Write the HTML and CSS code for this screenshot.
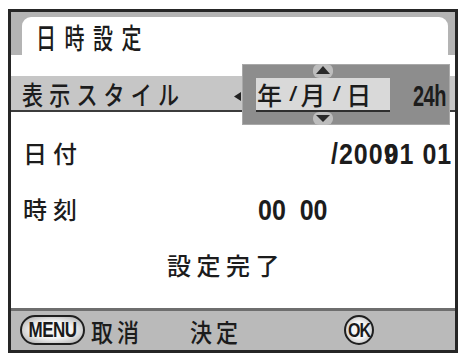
FILE: index.html
```html
<!DOCTYPE html>
<html lang="ja">
<head>
<meta charset="utf-8">
<title>日時設定</title>
<link rel="stylesheet" href="styles.css">
</head>
<body>
<div class="screen">
  <div class="tab"><div class="tab-inner"><span class="title">日時設定</span></div></div>
  <div class="gap"></div>
  <div class="style-row"><span class="style-label">表示スタイル</span></div>
  <div class="row"><span class="label">日付</span><span class="num date-val">/200<span class="ov">9</span>01 01</span></div>
  <div class="row"><span class="label">時刻</span><span class="num time-val">00&nbsp;&nbsp;00</span></div>
  <div class="row done-row"><span class="label">設定完了</span></div>
  <div class="spacer"></div>
  <div class="bar">
    <span class="pill menu"><span class="pill-text">MENU</span></span>
    <span class="bar-label cancel">取消</span>
    <span class="bar-label decide">決定</span>
    <span class="pill ok"><span class="pill-text">OK</span></span>
  </div>
  <div class="popup">
    <svg class="arrow-left" width="8" height="9" viewBox="0 0 8 9"><polygon points="7,0 7,9 0,4.5" fill="#222"/></svg>
    <svg class="arrow-up" width="22" height="14" viewBox="0 0 22 14"><rect x="1" y="0" width="20" height="14" rx="6" fill="#bdbdbd"/><polygon points="11,2 18,10 4,10" fill="#2a2a2a"/></svg>
    <div class="sel"><span class="cj y">年</span><span class="sl">/</span><span class="cj m">月</span><span class="sl">/</span><span class="cj d">日</span></div>
    <span class="h24">24h</span>
    <svg class="arrow-down" width="22" height="13" viewBox="0 0 22 13"><rect x="1" y="0" width="20" height="13" rx="6" fill="#bdbdbd"/><polygon points="4,3 18,3 11,10" fill="#2a2a2a"/></svg>
  </div>
</div>
</body>
</html>
```

FILE: styles.css
```css
* { box-sizing: border-box; }
html, body { margin: 0; padding: 0; background: #fff; }
body {
  font-family: "Noto Sans CJK JP", "Noto Sans", sans-serif;
  font-weight: 500;
  color: #1c1c1c;
}
.screen {
  position: relative;
  margin: 9px 0 0 8px;
  width: 450px;
  height: 344px;
  border: 3px solid #262626;
  display: flex;
  flex-direction: column;
  background: #fff;
  overflow: hidden;
}
.tab {
  flex: none;
  height: 43px;
  background: #b4b4b4;
  padding: 5px 7px 0 11px;
  display: flex;
}
.tab-inner {
  flex: 1;
  background: #fff;
  border-radius: 9px 9px 0 0;
  display: flex;
  align-items: center;
  padding: 4px 0 0 14px;
}
.title {
  display: inline-block;
  font-size: 20px;
  letter-spacing: 8.5px;
  line-height: 1;
  transform: scaleY(1.4);
}
.gap { flex: none; height: 21px; }
.style-row {
  flex: none;
  height: 36px;
  background: #c6c6c6;
  border-bottom: 2px solid #3c3c3c;
  display: flex;
  align-items: center;
  padding: 2px 0 0 11px;
}
.style-label {
  display: inline-block;
  font-size: 21px;
  letter-spacing: 6.2px;
  line-height: 1;
  transform: scaleY(1.25);
}
.row {
  flex: none;
  height: 30px;
  margin-top: 26px;
  display: flex;
  align-items: center;
  padding-left: 12px;
}
.label {
  font-size: 24px;
  letter-spacing: 6px;
  line-height: 30px;
  white-space: nowrap;
}
.num {
  display: inline-block;
  font-family: "Liberation Sans", Arial, sans-serif;
  font-weight: bold;
  font-size: 25px;
  line-height: 30px;
  transform: scaleY(1.2);
  white-space: nowrap;
}
.date-val { margin-left: 248px; letter-spacing: 1px; }
.ov { margin-right: -13.9px; }
.time-val { margin-left: 175px; }
.done-row { padding-left: 156px; }
.done-row .label { letter-spacing: 5.5px; }
.spacer { flex: 1; }
.bar {
  flex: none;
  height: 42px;
  border-top: 3px solid #6e6e6e;
  background: #bababa;
  display: flex;
  align-items: center;
  padding: 0 0 2px 9px;
}
.pill {
  flex: none;
  height: 30px;
  border: 2px solid #1f1f1f;
  border-radius: 15px;
  background: radial-gradient(ellipse at center, #f6f6f6 45%, #a4a4a4 100%);
  display: flex;
  align-items: center;
  justify-content: center;
}
.pill.menu { width: 65px; }
.pill.ok { width: 30px; margin-left: 102px; }
.pill-text {
  display: inline-block;
  font-family: "Liberation Sans", Arial, sans-serif;
  font-weight: bold;
  font-size: 17px;
  line-height: 1;
  letter-spacing: -0.5px;
  transform: scaleY(1.3);
  color: #1a1a1a;
}
.pill.ok .pill-text { font-size: 16px; letter-spacing: -1px; }
.bar-label {
  display: inline-block;
  font-size: 22px;
  letter-spacing: 4px;
  line-height: 1;
  transform: scaleY(1.15);
}
.cancel { margin-left: 6px; }
.decide { margin-left: 47px; }
.popup {
  position: absolute;
  left: 231px;
  top: 52px;
  width: 208px;
  height: 61px;
  background: #8d8d8d;
  border: 1px solid #a9a9a9;
  padding: 13px 0 0 13px;
  display: flex;
  align-items: flex-start;
}
.arrow-left { position: absolute; left: -9px; top: 27px; }
.arrow-up { position: absolute; left: 69px; top: -1px; }
.arrow-down { position: absolute; left: 69px; top: 47px; }
.sel {
  flex: none;
  width: 134px;
  height: 34px;
  background: #d9d9d9;
  border-bottom: 2px solid #2e2e2e;
  display: flex;
  align-items: center;
  padding-left: 1px;
}
.cj { font-size: 25px; line-height: 32px; color: #1c1c1c; }
.sl {
  font-family: "Liberation Sans", Arial, sans-serif;
  font-weight: bold;
  font-style: italic;
  font-size: 20px;
  line-height: 32px;
  color: #1c1c1c;
  margin-left: 8px;
}
.cj.m { margin-left: 5px; }
.cj.d { margin-left: 7px; }
.h24 {
  display: inline-block;
  margin: 7px 0 0 23px;
  font-family: "Liberation Sans", Arial, sans-serif;
  font-weight: bold;
  font-size: 20px;
  line-height: 20px;
  letter-spacing: -0.5px;
  transform: scaleY(1.5);
  color: #1c1c1c;
}
```
